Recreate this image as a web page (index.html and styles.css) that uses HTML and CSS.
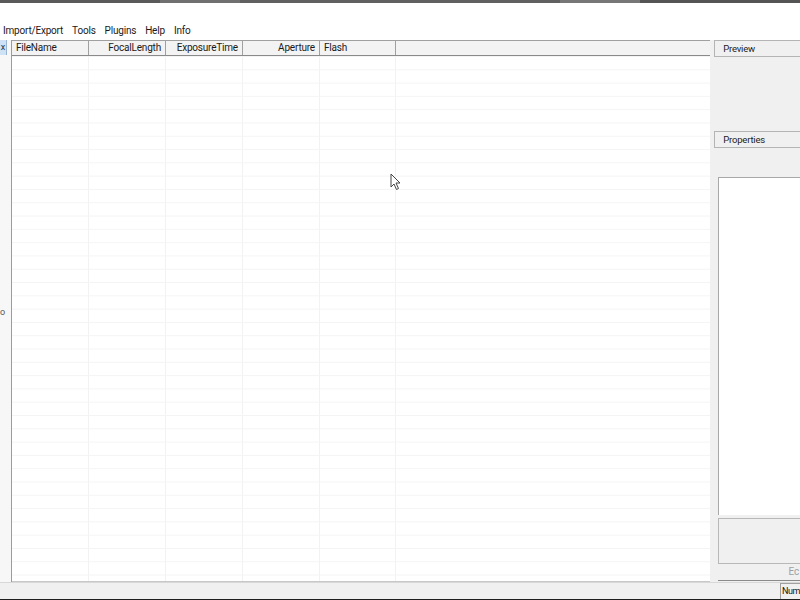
FILE: index.html
```html
<!DOCTYPE html>
<html lang="en">
<head>
    <meta charset="UTF-8">
    <title>Exif Viewer</title>
    <link rel="stylesheet" href="styles.css">
</head>
<body>
    <div class="window">
        <div class="title-edge"></div>
        <div class="menubar">
            <span>Import/Export</span>
            <span>Tools</span>
            <span>Plugins</span>
            <span>Help</span>
            <span>Info</span>
        </div>
        <div class="main">
            <div class="sidebar">
                <div class="side-tab">x</div>
                <div class="side-dot">o</div>
            </div>
            <div class="grid">
                <div class="grid-header">
                    <div class="col c1">FileName</div>
                    <div class="col c2 right">FocalLength</div>
                    <div class="col c3 right">ExposureTime</div>
                    <div class="col c4 right">Aperture</div>
                    <div class="col c5">Flash</div>
                    <div class="col rest"></div>
                </div>
                <div class="grid-body"></div>
            </div>
            <div class="side-panel">
                <div class="panel-head">Preview</div>
                <div class="preview-area"></div>
                <div class="panel-head">Properties</div>
                <div class="props-gap"></div>
                <div class="props-box"></div>
                <div class="edit-box"></div>
                <div class="edit-label">Ec</div>
            </div>
        </div>
        <div class="statusbar">
            <div class="status-num">Num</div>
        </div>
        <div class="taskbar"></div>

        <svg class="cursor" width="12" height="18" viewBox="0 0 12 18">
            <path d="M1 1 L1 14 L4 11 L6.5 16.5 L8.5 15.5 L6 10 L10 10 Z" fill="#fff" stroke="#444" stroke-width="1"/>
        </svg>
    </div>
</body>
</html>
```

FILE: styles.css
```css
body {
    margin: 0;
    background: #fff;
    font-family: Roboto, "Liberation Sans", sans-serif;
    font-size: 10px;
    letter-spacing: -0.2px;
    color: #1a1a1a;
}
.window {
    position: relative;
    width: 800px;
    height: 600px;
    overflow: hidden;
    display: flex;
    flex-direction: column;
}
.title-edge {
    height: 3px;
    background: linear-gradient(to right, #5a5a5a 0 20%, #707070 20% 30%, #606060 30% 70%, #777 70% 80%, #555 80%);
}
.menubar {
    height: 19px;
    margin-top: 18px;
    display: flex;
    align-items: center;
    gap: 9px;
    padding-left: 3px;
}
.main {
    height: 542px;
    display: flex;
    background: #f0f0f0;
}
.sidebar {
    width: 11px;
    background: #f7f7f7;
    border-right: 1px solid #9c9c9c;
    display: flex;
    flex-direction: column;
    align-items: flex-start;
    font-size: 9px;
}
.side-tab {
    height: 15px;
    width: 6px;
    background: #cfe2f5;
    border-right: 1px solid #99b4d1;
    text-align: center;
    line-height: 15px;
    color: #333;
    overflow: hidden;
}
.side-dot {
    margin-top: 252px;
    width: 6px;
    color: #555;
    overflow: hidden;
}
.grid {
    width: 700px;
    background: #fff;
    display: flex;
    flex-direction: column;
    border-bottom: 1px solid #c8c8c8;
}
.grid-header {
    height: 14px;
    display: flex;
    background: #f3f3f3;
    border-top: 1px solid #a0a0a0;
    border-bottom: 1px solid #8a8a8a;
}
.col {
    box-sizing: border-box;
    border-right: 1px solid #a0a0a0;
    padding: 0 4px;
    line-height: 14px;
    white-space: nowrap;
}
.right {
    text-align: right;
}
.c1 { width: 77px; }
.c2 { width: 77px; }
.c3 { width: 77px; }
.c4 { width: 77px; }
.c5 { width: 76px; }
.rest { flex: 1; border-right: none; }
.grid-body {
    flex: 1;
    background-color: #fff;
    background-image:
        linear-gradient(to bottom, #f4f4f4 1px, transparent 1px),
        linear-gradient(to right, transparent 76px, #f2f2f2 76px 77px, transparent 77px 153px, #f2f2f2 153px 154px, transparent 154px 230px, #f2f2f2 230px 231px, transparent 231px 307px, #f2f2f2 307px 308px, transparent 308px 383px, #f2f2f2 383px 384px, transparent 384px);
    background-size: 100% 13.3px, 100% 100%;
    background-position: 0 0, 0 0;
}
.side-panel {
    width: 86px;
    margin-left: 2px;
    display: flex;
    flex-direction: column;
    padding-left: 2px;
}
.panel-head {
    height: 15px;
    background: #f0f0f0;
    border: 1px solid #b4b4b4;
    border-right: none;
    padding-left: 8px;
    line-height: 15px;
    font-size: 9.5px;
    color: #222;
}
.preview-area {
    height: 74px;
}
.props-gap {
    height: 29px;
}
.props-box {
    height: 337px;
    margin-left: 4px;
    background: #fff;
    border-top: 1px solid #a8a8a8;
    border-left: 1px solid #a8a8a8;
}
.edit-box {
    height: 44px;
    margin-left: 4px;
    margin-top: 3px;
    border: 1px solid #b8b8b8;
    border-right: none;
}
.edit-label {
    margin-left: 4px;
    height: 14px;
    text-align: right;
    font-size: 10px;
    color: #a0a0a0;
    padding-right: 1px;
    border-bottom: 1px solid #8a8a8a;
    padding-top: 2px;
}
.statusbar {
    height: 16px;
    background: #f0f0f0;
    border-top: 1px solid #d8d8d8;
    display: flex;
    justify-content: flex-end;
}
.status-num {
    width: 18px;
    padding-left: 1px;
    border-left: 1px solid #a0a0a0;
    border-top: 1px solid #a0a0a0;
    line-height: 15px;
    font-size: 9px;
    letter-spacing: -0.4px;
    white-space: nowrap;
    color: #111;
}
.taskbar {
    flex: 1;
    background: #1e1e1e;
}
.cursor {
    position: absolute;
    left: 390px;
    top: 173px;
}
```
